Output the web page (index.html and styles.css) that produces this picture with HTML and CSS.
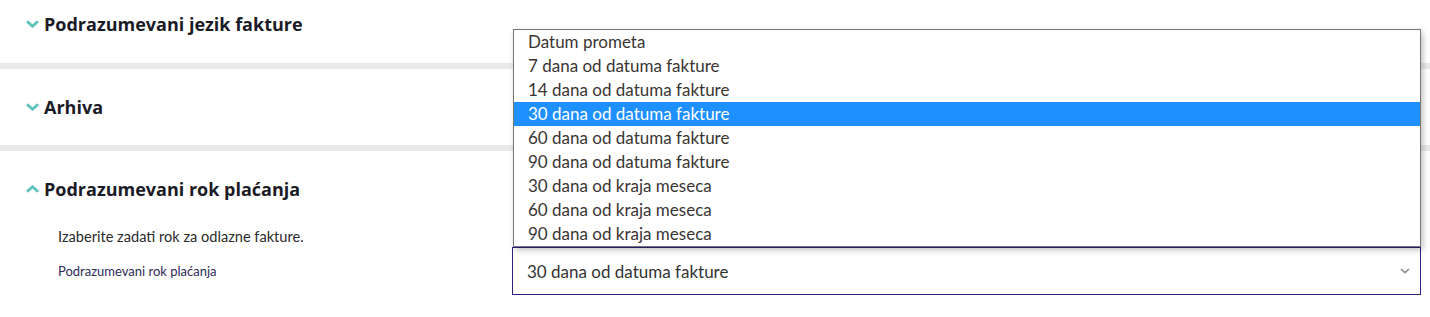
FILE: index.html
```html
<!DOCTYPE html>
<html lang="sr">
<head>
<meta charset="utf-8">
<link rel="stylesheet" href="styles.css">
</head>
<body>
<div class="page">
  <section class="panel panel-first">
    <h2 class="panel-title">
      <svg class="chev" viewBox="0 0 13 8" width="13" height="8"><path d="M1 1.2 L6.5 6.3 L12 1.2" fill="none" stroke="#5cc3bd" stroke-width="2.8"/></svg>
      <span>Podrazumevani jezik fakture</span>
    </h2>
  </section>
  <section class="panel">
    <h2 class="panel-title">
      <svg class="chev" viewBox="0 0 13 8" width="13" height="8"><path d="M1 1.2 L6.5 6.3 L12 1.2" fill="none" stroke="#5cc3bd" stroke-width="2.8"/></svg>
      <span>Arhiva</span>
    </h2>
  </section>
  <section class="panel panel-open">
    <h2 class="panel-title">
      <svg class="chev" viewBox="0 0 13 8" width="13" height="8"><path d="M1 6.8 L6.5 1.7 L12 6.8" fill="none" stroke="#5cc3bd" stroke-width="2.8"/></svg>
      <span>Podrazumevani rok plaćanja</span>
    </h2>
    <div class="panel-body">
      <p class="desc">Izaberite zadati rok za odlazne fakture.</p>
      <div class="field">
        <label class="field-label">Podrazumevani rok plaćanja</label>
        <div class="select-wrap">
          <div class="select">
            <span>30 dana od datuma fakture</span>
            <svg class="select-chev" viewBox="0 0 10 6" width="10" height="6"><path d="M1 1 L5 4.6 L9 1" fill="none" stroke="#8a8a8a" stroke-width="1.6"/></svg>
          </div>
          <ul class="dropdown">
            <li>Datum prometa</li>
            <li>7 dana od datuma fakture</li>
            <li>14 dana od datuma fakture</li>
            <li class="active">30 dana od datuma fakture</li>
            <li>60 dana od datuma fakture</li>
            <li>90 dana od datuma fakture</li>
            <li>30 dana od kraja meseca</li>
            <li>60 dana od kraja meseca</li>
            <li>90 dana od kraja meseca</li>
          </ul>
        </div>
      </div>
    </div>
  </section>
</div>
</body>
</html>
```
FILE: styles.css
```css
html, body {
  margin: 0;
  padding: 0;
  background: #e9e9e9;
}
body {
  font-family: Lato, "Open Sans", sans-serif;
  width: 1430px;
  height: 317px;
  overflow: hidden;
}
.page {
  display: flex;
  flex-direction: column;
  gap: 6px;
}
.panel {
  background: #ffffff;
  padding: 26px 0 26px 26px;
}
.panel-first {
  padding-top: 12px;
  padding-bottom: 27px;
}
.panel-open {
  padding-bottom: 30px;
}
.panel-title {
  margin: 0;
  height: 24px;
  display: flex;
  align-items: center;
  gap: 5px;
  font-family: "Open Sans", sans-serif;
  font-weight: 700;
  font-size: 18px;
  color: #1b1b26;
}
.chev {
  display: block;
  flex: none;
}
.panel-body {
  padding-left: 32px;
  padding-top: 26px;
}
.desc {
  margin: 0;
  height: 20px;
  line-height: 20px;
  font-size: 14.6px;
  color: #2a2a2a;
}
.field {
  display: grid;
  grid-template-columns: 454px 909px;
  align-items: center;
}
.field-label {
  font-size: 13px;
  color: #2d2b58;
}
.select-wrap {
  position: relative;
}
.select {
  height: 48px;
  box-sizing: border-box;
  border: 1px solid #2e237e;
  display: flex;
  align-items: center;
  justify-content: space-between;
  padding: 0 10px 0 14px;
  font-size: 17px;
  color: #333;
  background: #fff;
}
.select-chev {
  display: block;
}
.dropdown {
  position: absolute;
  left: 1px;
  right: 0;
  bottom: 100%;
  margin: 0;
  padding: 0;
  list-style: none;
  background: #fff;
  border: 1px solid #767676;
  box-shadow: 2px 3px 6px rgba(0, 0, 0, 0.25);
}
.dropdown li {
  height: 24px;
  line-height: 24px;
  padding-left: 14px;
  font-size: 17px;
  color: #3a3533;
}
.dropdown li.active {
  background: #1e90ff;
  color: #fff;
}
```
